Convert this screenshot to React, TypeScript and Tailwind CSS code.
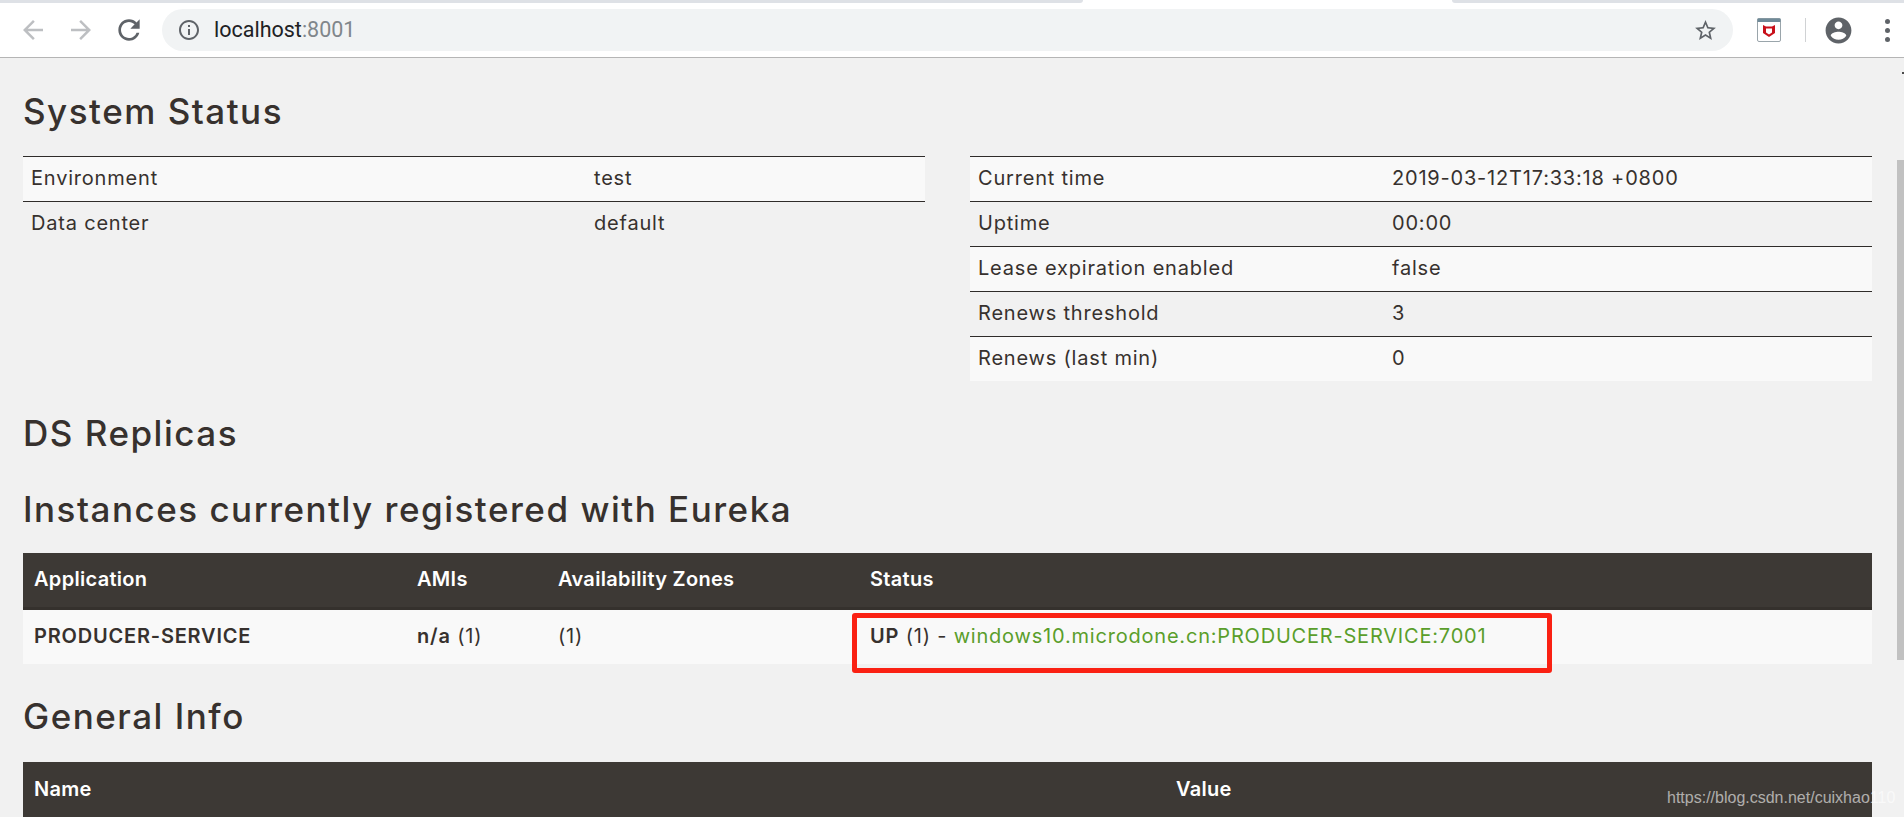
const font = "font-['Inter',sans-serif]";

function Glyph({ d, size, className }: { d: string; size: number; className: string }) {
  return (
    <svg width={size} height={size} viewBox="0 0 24 24" fill="currentColor" className={`shrink-0 ${className}`}>
      <path d={d} />
    </svg>
  );
}

const arrowBack = "M20 11H7.83l5.59-5.59L12 4l-8 8 8 8 1.41-1.41L7.83 13H20v-2z";
const arrowForward = "M12 4l-1.41 1.41L16.170 11H4v2h12.170l-5.580 5.590L12 20l8-8z";
const reload =
  "M17.65 6.35C16.2 4.9 14.21 4 12 4c-4.42 0-7.99 3.58-7.99 8s3.57 8 7.99 8c3.73 0 6.84-2.55 7.73-6h-2.08c-.82 2.33-3.04 4-5.65 4-3.31 0-6-2.69-6-6s2.69-6 6-6c1.66 0 3.14.69 4.22 1.78L13 11h7V4l-2.35 2.35z";
const info =
  "M11 7h2v2h-2zm0 4h2v6h-2zm1-9C6.48 2 2 6.48 2 12s4.48 10 10 10 10-4.48 10-10S17.52 2 12 2zm0 18c-4.41 0-8-3.59-8-8s3.59-8 8-8 8 3.59 8 8-3.59 8-8 8z";
const star =
  "M22 9.24l-7.19-.62L12 2 9.190 8.630 2 9.240l5.460 4.730L5.820 21 12 17.270 18.180 21l-1.630-7.030L22 9.240zM12 15.400l-3.760 2.270 1-4.280-3.320-2.880 4.380-.380L12 6.100l1.710 4.040 4.380.380-3.320 2.880 1 4.280L12 15.400z";
const account =
  "M12 2C6.48 2 2 6.48 2 12s4.48 10 10 10 10-4.48 10-10S17.52 2 12 2zm0 3c1.66 0 3 1.34 3 3s-1.34 3-3 3-3-1.34-3-3 1.34-3 3-3zm0 14.200c-2.500 0-4.710-1.280-6-3.220.030-1.990 4-3.080 6-3.080 1.990 0 5.970 1.090 6 3.080-1.290 1.940-3.500 3.220-6 3.220z";

function InfoRow({ label, value, odd, labelWidth }: { label: string; value: string; odd: boolean; labelWidth: string }) {
  return (
    <div className={`flex h-[45px] items-center border-t border-[#2f2c2a] pb-[2px] text-[20px] tracking-[0.8px] text-[#37312e] ${odd ? "bg-[#f9f9f9]" : ""}`}>
      <div className={`${labelWidth} pl-2`}>{label}</div>
      <div>{value}</div>
    </div>
  );
}

const left = [
  ["Environment", "test"],
  ["Data center", "default"],
];
const right = [
  ["Current time", "2019-03-12T17:33:18 +0800"],
  ["Uptime", "00:00"],
  ["Lease expiration enabled", "false"],
  ["Renews threshold", "3"],
  ["Renews (last min)", "0"],
];

function Heading({ children, className }: { children: string; className: string }) {
  return <h2 className={`text-[35px] font-medium leading-[44px] tracking-[1.5px] text-[#37312e] ${className}`}>{children}</h2>;
}

export default function App() {
  return (
    <div className={`flex h-[817px] flex-col overflow-hidden bg-[#f1f1f1] ${font}`}>
      {/* browser chrome */}
      <div className="flex h-[58px] flex-col border-b border-[#b5b5b5] bg-white">
        <div className="flex h-[3px]">
          <div className="w-[1083px] rounded-br-[3px] bg-[#dee1e6]" />
          <div className="w-[369px]" />
          <div className="flex-1 rounded-bl-[3px] bg-[#dee1e6]" />
        </div>
        <div className="flex flex-1 items-center pl-[18px]">
          <Glyph d={arrowBack} size={30} className="text-[#bdbfc2]" />
          <Glyph d={arrowForward} size={30} className="ml-[18px] text-[#bdbfc2]" />
          <Glyph d={reload} size={32} className="ml-[17px] text-[#5f6368]" />
          <div className="ml-[17px] flex h-[42px] w-[1571px] shrink-0 items-center rounded-full bg-[#f1f3f4] pl-[15px] pr-[15px]">
            <Glyph d={info} size={24} className="text-[#5f6368]" />
            <span className="ml-[13px] font-['Roboto',sans-serif] text-[21.5px] text-[#202124]">
              localhost<span className="text-[#80868b]">:8001</span>
            </span>
            <Glyph d={star} size={25} className="ml-auto text-[#5f6368]" />
          </div>
          <svg width="24" height="24" viewBox="0 0 24 24" className="ml-[24px] shrink-0">
            <rect x="0.5" y="0.5" width="23" height="23" rx="1.5" fill="#fff" stroke="#9aa5ab" />
            <rect x="0.5" y="0.5" width="23" height="3.500" fill="#6f8a98" />
            <path d="M6 7l3 1.500h6L18 7v8l-6 4-6-4z" fill="#c8101a" />
            <path d="M9 10.500h6v4l-3 2-3-2z" fill="#fff" />
          </svg>
          <div className="ml-[24px] h-[24px] w-px shrink-0 bg-[#d0d2d4]" />
          <Glyph d={account} size={31} className="ml-[17px] text-[#5f6368]" />
          <div className="ml-[31px] flex flex-col gap-[4px]">
            <div className="h-[5px] w-[5px] rounded-full bg-[#5f6368]" />
            <div className="h-[5px] w-[5px] rounded-full bg-[#5f6368]" />
            <div className="h-[5px] w-[5px] rounded-full bg-[#5f6368]" />
          </div>
        </div>
      </div>

      {/* page */}
      <div className="relative flex-1 px-[23px]">
        <div className="w-[1849px]">
          <Heading className="mt-[31px]">System Status</Heading>
          <div className="mt-[23px] flex justify-between">
            <div className="w-[902px]">
              {left.map(([l, v], i) => (
                <InfoRow key={l} label={l} value={v} odd={i % 2 === 0} labelWidth="w-[571px]" />
              ))}
            </div>
            <div className="w-[902px]">
              {right.map(([l, v], i) => (
                <InfoRow key={l} label={l} value={v} odd={i % 2 === 0} labelWidth="w-[422px]" />
              ))}
            </div>
          </div>
          <Heading className="mt-[30px]">DS Replicas</Heading>
          <Heading className="mt-[32px]">Instances currently registered with Eureka</Heading>

          <div className="mt-[22px]">
            <div className="flex h-[57px] items-center border-b-[3px] border-[#35312d] bg-[#3d3935] pb-[2px] text-[20px] font-semibold tracking-[0.3px] text-white">
              <div className="w-[394px] pl-[11px]">Application</div>
              <div className="w-[141px]">AMIs</div>
              <div className="w-[312px]">Availability Zones</div>
              <div>Status</div>
            </div>
            <div className="flex h-[54px] items-center bg-[#f9f9f9] pb-[2px] text-[20px] tracking-[0.8px] text-[#37312e]">
              <div className="w-[394px] pl-[11px] font-semibold">PRODUCER-SERVICE</div>
              <div className="w-[141px]"><b className="font-semibold">n/a</b> (1)</div>
              <div className="w-[312px]">(1)</div>
              <div>
                <b className="font-semibold">UP</b> (1) - <span className="text-[#5a9e2b]">windows10.microdone.cn:PRODUCER-SERVICE:7001</span>
              </div>
            </div>
          </div>

          <Heading className="mt-[30px]">General Info</Heading>

          <div className="mt-[24px] flex h-[55px] items-center bg-[#3d3935] pb-[2px] text-[20px] font-semibold tracking-[0.3px] text-white">
            <div className="w-[1153px] pl-[11px]">Name</div>
            <div>Value</div>
          </div>
        </div>

        {/* annotation and watermark sit on top of the screenshot */}
        <div className="absolute left-[852px] top-[555px] h-[60px] w-[700px] rounded-[3px] border-[5px] border-[#fa2113]" />
        <div className="absolute left-[1667px] top-[728px] font-['Liberation_Sans',sans-serif] text-[16px] text-[#ffffff]/60">https://blog.csdn.net/cuixhao110</div>

        {/* scrollbar */}
        <div className="absolute right-0 top-[14px] h-[2px] w-[2px] bg-[#4a4a4a]" />
        <div className="absolute right-0 top-[102px] h-[500px] w-[7px] bg-[#c1c1c1]" />
      </div>
    </div>
  );
}
